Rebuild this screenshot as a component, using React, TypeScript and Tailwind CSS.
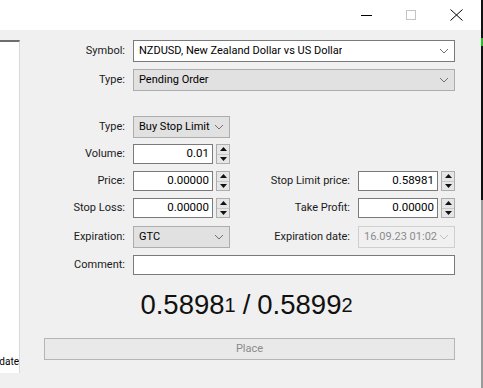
import React from "react";

const font = "font-['Roboto','Liberation_Sans',sans-serif]";

const Chevron = ({ color = "#606060" }: { color?: string }) => (
  <svg width="10" height="6" viewBox="0 0 10 6" className="shrink-0">
    <polyline points="1,1 5,5 9,1" fill="none" stroke={color} strokeWidth="1" />
  </svg>
);

const Spinner = () => (
  <div className="ml-[3px] flex h-[20px] w-[14px] flex-col border border-[#adadad] bg-[#e6e6e6]">
    <div className="flex flex-1 items-center justify-center border-b border-[#c8c8c8]">
      <svg width="7" height="4" viewBox="0 0 7 4">
        <polygon points="0,4 3.5,0 7,4" fill="#111" />
      </svg>
    </div>
    <div className="flex flex-1 items-center justify-center">
      <svg width="7" height="4" viewBox="0 0 7 4">
        <polygon points="0,0 3.5,4 7,0" fill="#111" />
      </svg>
    </div>
  </div>
);

const Label = ({ text, w }: { text: string; w: string }) => (
  <div className={`${w} shrink-0 pr-[8px] text-right text-[11px] text-[#1a1a1a]`}>{text}</div>
);

const Select = ({
  value,
  w,
  white,
  disabled,
}: {
  value: string;
  w: string;
  white?: boolean;
  disabled?: boolean;
}) => (
  <div
    className={`${w} flex h-[22px] items-center justify-between border pl-[5px] pr-[5px] text-[11px] ${
      disabled
        ? "border-[#cfcfcf] bg-[#f0f0f0] text-[#8c8c8c]"
        : white
        ? "border-[#7a7a7a] bg-white text-black"
        : "border-[#adadad] bg-[#e1e1e1] text-black"
    }`}
  >
    <span className="truncate">{value}</span>
    <Chevron color={disabled ? "#c0c0c0" : "#707070"} />
  </div>
);

const NumInput = ({ value }: { value: string }) => (
  <div className="flex items-center">
    <div className="flex h-[20px] w-[80px] items-center justify-end border border-[#7a7a7a] bg-white pr-[3px] text-[11.5px] text-black">
      {value}
    </div>
    <Spinner />
  </div>
);

export default function App() {
  return (
    <div className={`flex h-[388px] w-[483px] overflow-hidden ${font}`}>
      <div className="flex w-[481px] flex-col">
        {/* title bar */}
        <div className="flex h-[30px] shrink-0 items-stretch justify-end bg-white pr-[2px]">
          <div className="flex w-[46px] shrink-0 items-center justify-center">
            <div className="h-[1px] w-[11px] shrink-0 border-t border-black" />
          </div>
          <div className="flex w-[44px] shrink-0 items-center justify-center">
            <div className="h-[10px] w-[10px] border border-[#c4c4c4]" />
          </div>
          <div className="flex w-[46px] shrink-0 items-center justify-center">
            <svg width="13" height="12" viewBox="0 0 13 12">
              <path d="M0.5 0.5 L12.5 11.5 M12.5 0.5 L0.5 11.5" stroke="#000" strokeWidth="1" />
            </svg>
          </div>
        </div>

        <div className="flex flex-1 bg-[#f0f0f0]">
          {/* left panel */}
          <div className="mt-[10px] flex h-[333px] w-[20px] shrink-0 flex-col justify-end overflow-hidden border-r border-t-2 border-r-[#d9d9d9] border-t-[#6d6d6d] bg-white pb-[4px]">
            <div className="flex justify-end text-[10px] leading-[14px] text-black">
              <span className="whitespace-nowrap">date</span>
            </div>
          </div>

          {/* form */}
          <div className="flex flex-1 flex-col">
            <div className="mt-[10px] flex h-[22px] items-center">
              <Label text="Symbol:" w="w-[113px]" />
              <Select value="NZDUSD, New Zealand Dollar vs US Dollar" w="w-[322px]" white />
            </div>
            <div className="mt-[7px] flex h-[22px] items-center">
              <Label text="Type:" w="w-[113px]" />
              <Select value="Pending Order" w="w-[322px]" />
            </div>

            <div className="mt-[25px] flex h-[22px] items-center">
              <Label text="Type:" w="w-[113px]" />
              <Select value="Buy Stop Limit" w="w-[97px]" />
            </div>
            <div className="mt-[5px] flex h-[22px] items-center">
              <Label text="Volume:" w="w-[113px]" />
              <NumInput value="0.01" />
            </div>
            <div className="mt-[5px] flex h-[22px] items-center">
              <Label text="Price:" w="w-[113px]" />
              <NumInput value="0.00000" />
              <Label text="Stop Limit price:" w="w-[128px]" />
              <NumInput value="0.58981" />
            </div>
            <div className="mt-[5px] flex h-[22px] items-center">
              <Label text="Stop Loss:" w="w-[113px]" />
              <NumInput value="0.00000" />
              <Label text="Take Profit:" w="w-[128px]" />
              <NumInput value="0.00000" />
            </div>
            <div className="mt-[7px] flex h-[22px] items-center">
              <Label text="Expiration:" w="w-[113px]" />
              <Select value="GTC" w="w-[97px]" />
              <Label text="Expiration date:" w="w-[128px]" />
              <Select value="16.09.23 01:02" w="w-[97px]" disabled />
            </div>
            <div className="mt-[6px] flex h-[22px] items-center">
              <Label text="Comment:" w="w-[113px]" />
              <div className="h-[20px] w-[322px] border border-[#7a7a7a] bg-white" />
            </div>

            <div className="ml-[24px] flex w-[411px] flex-col">
              <div className="mt-[8px] flex h-[42px] items-center justify-center pr-[6px] font-['Liberation_Sans',sans-serif] text-[27.5px] leading-none text-[#111]">
                <span>0.5898</span>
                <span className="text-[20px]">1</span>
                <span className="mx-[7px]">/</span>
                <span>0.5899</span>
                <span className="text-[20px]">2</span>
              </div>
              <div className="mt-[12px] flex h-[22px] items-center justify-center border border-[#b5b5b5] bg-[#e9e9e9] text-[11px] text-[#8a8a8a]">
                Place
              </div>
            </div>
          </div>
        </div>
      </div>

      {/* right edge */}
      <div className="flex w-[2px] flex-col">
        <div className="h-[38px] bg-[#111]" />
        <div className="h-[8px] bg-[#2db82d]" />
        <div className="h-[154px] bg-[#111]" />
        <div className="flex-1 bg-[#9a9a9a]" />
      </div>
    </div>
  );
}
